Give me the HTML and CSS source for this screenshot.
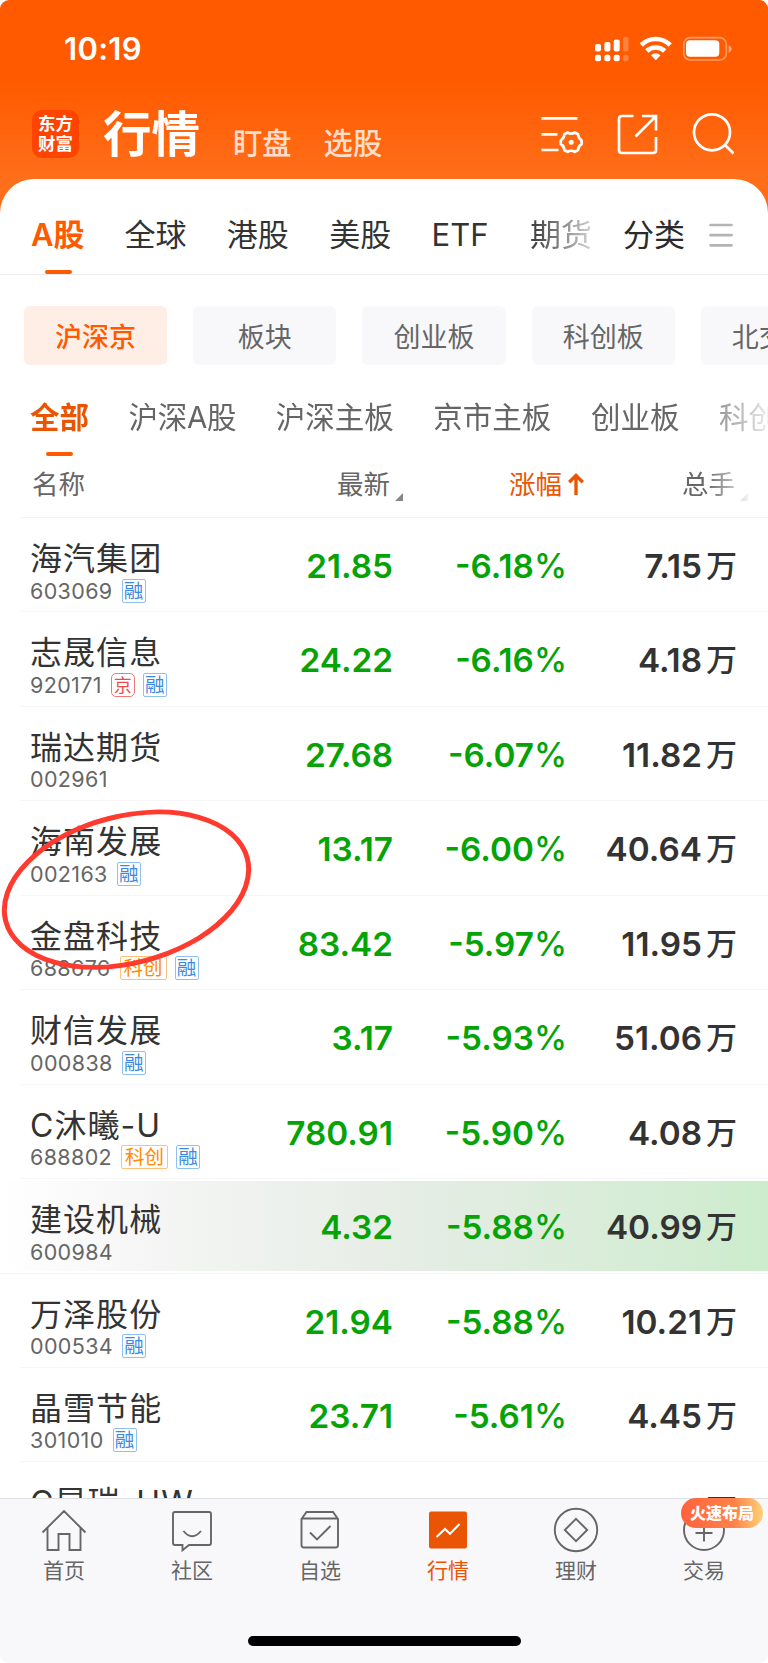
FILE: index.html
```html
<!DOCTYPE html>
<html lang="zh-CN">
<head>
<meta charset="utf-8">
<title>行情</title>
<link rel="stylesheet" href="styles.css">
</head>
<body>
<div class="app">
  <header class="top">
    <div class="status">
      <span class="time">10:19</span>
      <svg class="signals" width="138" height="26" viewBox="0 0 138 26" fill="#fff">
        <rect x="0" y="8" width="6" height="7.500" rx="2"/><rect x="9.400" y="6" width="6" height="9.500" rx="2"/><rect x="18.700" y="3.500" width="6" height="12" rx="2"/><rect x="28" y="1" width="5.500" height="14.500" rx="2" opacity=".25"/>
        <rect x="0" y="18.800" width="6" height="6.500" rx="2"/><rect x="9.400" y="18.800" width="6" height="6.500" rx="2"/><rect x="18.700" y="18.800" width="6" height="6.500" rx="2"/><rect x="28" y="18.800" width="5.500" height="6.500" rx="2" opacity=".25"/>
        <g fill="none" stroke="#fff" stroke-width="4.600"><path d="M46.300 9a20.500 20.500 0 0 1 28.900 0"/><path d="M51.800 15a13 13 0 0 1 17.900 0"/></g>
        <path d="M56 19.300q4.750-4 9.500 0L60.750 24.200z"/>
        <rect x="88.700" y="1.700" width="42.600" height="22.300" rx="6.500" fill="none" stroke="#fff" stroke-opacity=".4" stroke-width="1.700"/>
        <rect x="91" y="4.200" width="33.300" height="16.500" rx="4"/><path d="M133.700 9.300q3 1.200 3 3.800t-3 3.800z" opacity=".45"/>
      </svg>
    </div>
    <div class="bar">
      <div class="logo"><span>东方</span><span>财富</span></div>
      <h1>行情</h1>
      <a class="sub">盯盘</a>
      <a class="sub">选股</a>
      <svg class="tools" width="194" height="44" viewBox="0 0 194 44" fill="none" stroke="#fff" stroke-width="2.700">
        <path d="M1.500 7.300h36M1.500 23.300h16M1.500 39h17"/>
        <path d="M27.600 21.500Q31.200 23.800 34.800 21.500L38 23.300Q38.200 27.300 41.600 29.300V33Q38.200 35 38 39L34.800 40.900Q31.200 38.600 27.600 40.900L24.400 39Q24.200 35 20.800 33V29.300Q24.200 27.300 24.400 23.300Z" stroke-linejoin="round"/>
        <circle cx="31.200" cy="31.200" r="2.500" fill="#fff" stroke="none"/>
        <path d="M93.500 5H82q-3 0-3 3v31q0 3 3 3h31q3 0 3-3V26M102 5h14v14.500M115.500 5.500L95.500 25.500"/>
        <circle cx="172" cy="21.300" r="18"/><path d="M185 34l8.500 8.500"/>
      </svg>
    </div>
  </header>

  <main class="panel">
    <nav class="markets">
      <a class="on">A股</a><a>全球</a><a>港股</a><a>美股</a><a class="etf">ETF</a><a class="fade">期货</a><a class="kinds">分类</a>
      <svg width="24" height="24" viewBox="0 0 24 24" stroke="#b4b4b4" stroke-width="2.700" stroke-linecap="round"><path d="M1.500 2h21M1.500 12.200h21M1.500 22.300h21"/></svg>
    </nav>
    <nav class="chips">
      <a class="on">沪深京</a><a>板块</a><a>创业板</a><a>科创板</a><a>北交所</a>
    </nav>
    <nav class="boards">
      <a class="on">全部</a><a class="a-share">沪深A股</a><a>沪深主板</a><a>京市主板</a><a>创业板</a><a>科创板</a>
    </nav>
    <div class="columns">
      <span class="c-name">名称</span>
      <span class="c-price">最新<i class="corner"></i></span>
      <span class="c-rate">涨幅<svg width="16" height="22" viewBox="0 0 16 22" fill="none" stroke="#ea5504" stroke-width="3.400"><path d="M8 22V2.500M1.200 9.200L8 2.500l6.800 6.700"/></svg></span>
      <span class="c-vol">总手<i class="corner"></i></span>
    </div>

    <section class="list">
      <div class="row"><div class="stock"><b>海汽集团</b><p>603069<em>融</em></p></div><span class="price">21.85</span><span class="rate">-6.18<i>%</i></span><span class="vol">7.15<i>万</i></span></div>
      <div class="row"><div class="stock"><b>志晟信息</b><p>920171<em class="jing">京</em><em>融</em></p></div><span class="price">24.22</span><span class="rate">-6.16<i>%</i></span><span class="vol">4.18<i>万</i></span></div>
      <div class="row"><div class="stock"><b>瑞达期货</b><p>002961</p></div><span class="price">27.68</span><span class="rate">-6.07<i>%</i></span><span class="vol">11.82<i>万</i></span></div>
      <div class="row"><div class="stock"><b>海南发展</b><p>002163<em>融</em></p></div><span class="price">13.17</span><span class="rate">-6.00<i>%</i></span><span class="vol">40.64<i>万</i></span></div>
      <div class="row"><div class="stock"><b>金盘科技</b><p>688676<em class="star">科创</em><em>融</em></p></div><span class="price">83.42</span><span class="rate">-5.97<i>%</i></span><span class="vol">11.95<i>万</i></span></div>
      <div class="row"><div class="stock"><b>财信发展</b><p>000838<em>融</em></p></div><span class="price">3.17</span><span class="rate">-5.93<i>%</i></span><span class="vol">51.06<i>万</i></span></div>
      <div class="row"><div class="stock"><b>C沐曦-U</b><p>688802<em class="star">科创</em><em>融</em></p></div><span class="price">780.91</span><span class="rate">-5.90<i>%</i></span><span class="vol">4.08<i>万</i></span></div>
      <div class="row flash"><div class="stock"><b>建设机械</b><p>600984</p></div><span class="price">4.32</span><span class="rate">-5.88<i>%</i></span><span class="vol">40.99<i>万</i></span></div>
      <div class="row"><div class="stock"><b>万泽股份</b><p>000534<em>融</em></p></div><span class="price">21.94</span><span class="rate">-5.88<i>%</i></span><span class="vol">10.21<i>万</i></span></div>
      <div class="row"><div class="stock"><b>晶雪节能</b><p>301010<em>融</em></p></div><span class="price">23.71</span><span class="rate">-5.61<i>%</i></span><span class="vol">4.45<i>万</i></span></div>
      <div class="row cut"><div class="stock"><b>C昂瑞-UW</b></div><span class="vol"><i>万</i></span></div>
      <svg class="mark" width="256" height="166" viewBox="0 0 256 166"><ellipse cx="126.500" cy="83.700" rx="124.800" ry="73.300" transform="rotate(-14.600 126.500 83.700)" fill="none" stroke="#ff3b30" stroke-width="5"/></svg>
    </section>
  </main>

  <footer class="tabbar">
    <div class="items">
      <a><svg width="48" height="48" viewBox="0 0 48 48"><path d="M2.500 26.500L24 5l21.500 21.500M7.500 22v22h11V28h11v16h11V22"/></svg>首页</a>
      <a><svg width="48" height="48" viewBox="0 0 48 48"><path d="M7 6h34q2 0 2 2v29q0 2-2 2H21l-6.500 5.200V39H7q-2 0-2-2V8q0-2 2-2zM15.500 25q8.500 10.500 17.500 0"/></svg>社区</a>
      <a><svg width="48" height="48" viewBox="0 0 48 48"><path d="M5.500 13v26q0 2.500 2.500 2.500h31.500q2.500 0 2.500-2.500V13l-5-7H10.500zM5.500 12.500H42M14 26.500l7 7L34.500 20"/></svg>自选</a>
      <a class="on"><svg width="48" height="48" viewBox="0 0 48 48"><rect x="5" y="5.500" width="38" height="37" rx="2" fill="#ea5504" stroke="none"/><path d="M12.500 31l8.500-8 5 4.800L35.500 18" stroke="#fff" stroke-width="2"/></svg>行情</a>
      <a><svg width="48" height="48" viewBox="0 0 48 48"><circle cx="24" cy="24" r="21.200"/><path d="M24 12.800L35.200 24 24 35.200 12.800 24z"/></svg>理财</a>
      <a><svg width="48" height="48" viewBox="0 0 48 48"><circle cx="24" cy="24" r="20"/><path d="M15.500 27h17M24 18.500v17"/></svg>交易<span class="promo">火速布局</span></a>
    </div>
    <div class="home"></div>
  </footer>
</div>
</body>
</html>
```
FILE: styles.css
```css
* { box-sizing: border-box; }
body { margin: 0; background: #fff; font-family: Inter, "Noto Sans CJK SC", sans-serif; color: #333; }
h1, p { margin: 0; }
i, em { font-style: normal; }
svg { display: block; flex: none; }
.app { width: 768px; height: 1663px; overflow: hidden; border-radius: 9px; display: flex; flex-direction: column; background: linear-gradient(#ff5a00 0 80px, #ff6f1a 180px, #ff6a14 230px, #fff 231px); white-space: nowrap; }
.top { height: 179px; flex: none; }
.status { height: 98px; padding: 36px 35px 0 64px; display: flex; justify-content: space-between; color: #fff; }
.time { font-size: 31px; line-height: 26px; font-weight: 600; letter-spacing: .3px; }
.bar { height: 81px; padding-left: 32px; display: flex; align-items: flex-start; color: #fff; }
.logo { width: 47px; height: 48px; margin-top: 12px; border-radius: 10px; background: #ff4400; display: flex; flex-direction: column; align-items: center; padding-top: 3px; font: 700 17.500px/20px "Noto Sans CJK SC", sans-serif; }
h1 { margin: 7px 33px 0 24px; font-size: 48.500px; line-height: 60px; font-weight: 600; }
.sub { margin: 24px 32px 0 0; font-size: 29.300px; line-height: 43px; font-weight: 500; color: rgba(255,255,255,.8); }
.tools { margin: 12.500px 0 0 126px; }

.panel { position: relative; height: 1319px; flex: none; overflow: hidden; background: #fff; border-radius: 34px 34px 0 0; }
.markets { height: 96px; border-bottom: 1px solid #ececee; padding-left: 31px; display: flex; font-size: 31px; line-height: 112px; color: #333; }
.markets a { margin-right: 40.400px; width: 62px; }
.markets .on { width: 53px; font-weight: 600; color: #ff5a00; position: relative; }
.on::after { content: ""; position: absolute; width: 27px; height: 4px; border-radius: 2px; background: #ff5a00; }
.markets .on::after { left: 14px; top: 91px; }
.markets .etf { width: 58px; }
.markets .fade { background: linear-gradient(90deg, #444 10%, #ccc 95%); -webkit-background-clip: text; background-clip: text; color: transparent; margin-right: 31px; }
.markets .kinds { margin-right: 24px; color: #2b2b2b; }
.markets svg { margin-top: 43.500px; }
.chips { padding: 31px 0 0 24px; display: flex; gap: 26px; }
.chips a { width: 143.200px; height: 59px; flex: none; border-radius: 6px; background: #f8f8fb; text-align: center; font-size: 27px; line-height: 63px; color: #666; }
.chips .on { background: #ffeee6; color: #ff5a00; font-weight: 500; }
.chips .on::after { display: none; }
.boards { height: 92px; padding-left: 30px; display: flex; gap: 39.600px; font-size: 29.500px; line-height: 105px; color: #666; -webkit-mask-image: linear-gradient(90deg, #000 690px, transparent 780px); mask-image: linear-gradient(90deg, #000 690px, transparent 780px); }
.boards .on { font-weight: 600; color: #ea5504; position: relative; }
.boards .on::after { left: 15.500px; top: 87px; }
.boards .a-share { width: 107.500px; letter-spacing: -.3px; }
.columns { height: 61px; margin-left: 20px; border-bottom: 1px solid #f3f3f5; display: grid; grid-template-columns: 317px 172px 172px 87px; font-size: 26.500px; line-height: 55px; color: #666; }
.c-name { padding-left: 12px; }
.c-price, .c-rate, .c-vol { display: flex; }
.c-rate { color: #ea5504; }
.c-rate svg { margin: 16px 0 0 6px; }
.corner { margin: 36px 0 0 5px; width: 8px; height: 8px; background: #85858c; clip-path: polygon(100% 0, 100% 100%, 0 100%); }
.c-vol { padding-left: 1px; -webkit-mask-image: linear-gradient(90deg, #000 25px, transparent 72px); mask-image: linear-gradient(90deg, #000 25px, transparent 72px); }

.list { position: relative; }
.row { height: 94.450px; display: grid; grid-template-columns: 220px 153px 172px 172px; align-items: start; border-bottom: 1.500px solid #f6f6f8; margin-left: 20px; }
.stock { padding: 20px 0 0 10px; }
.stock b { display: block; font-weight: 400; font-size: 32px; line-height: 42px; letter-spacing: 1.050px; }
.stock p { display: flex; height: 24px; margin-top: -1.500px; font-size: 21.500px; line-height: 24px; letter-spacing: .35px; color: #666; }
em { height: 24px; width: 24px; margin-left: 8px; border: 1.500px solid #8fc0f2; border-radius: 2px; color: #3b8ae0; font: 19.500px/20px "Noto Sans CJK SC", sans-serif; letter-spacing: 0; text-align: center; }
em:first-child { margin-left: 9px; }
.jing { border-color: #f37979; color: #e84c4c; border-radius: 5px; font-size: 18px; }
.star { width: 47px; border-color: #ffc17a; color: #ff8a00; }
.price, .rate, .vol { text-align: right; font-size: 33.300px; line-height: 42px; padding-top: 27px; font-weight: 600; }
.price, .rate { color: #05a305; }
.rate { position: relative; left: 2px; }
.rate i { font-weight: 500; }
.vol i { display: inline-block; line-height: 38px; vertical-align: 1px; font-size: 31px; font-weight: 500; margin-left: 4px; }
.cut .vol { grid-column: 4; }
.flash { margin-left: 0; padding-left: 20px; background: linear-gradient(90deg, #fff 0, #f4f5f4 160px, #e6ede5 400px, #d6ecd6 640px, #cdeccd 768px) 0 2px / 100% 90px no-repeat; }
.mark { position: absolute; left: 0; top: 288px; }

.tabbar { height: 165px; flex: none; position: relative; border-top: 1px solid #dcdfe4; background: #f8f8fb; }
.items { display: grid; grid-template-columns: repeat(6, 128px); }
.items a { position: relative; padding-top: 7px; display: flex; flex-direction: column; align-items: center; font-size: 21px; line-height: 33px; color: #666; }
.items svg { fill: none; stroke: #666; stroke-width: 1.900; }
.items a.on { color: #ea5504; }
.items .on::after { display: none; }
.promo { position: absolute; left: 41px; top: -1px; width: 82px; height: 30px; border-radius: 15px; background: linear-gradient(90deg, #ff623d, #ff8247 65%, #ffd27a); color: #fff; text-align: center; font: 900 16px/29px "Noto Sans CJK SC", sans-serif; }
.home { width: 273px; height: 10px; border-radius: 5px; background: #000; margin: 49px auto 0; }
```
